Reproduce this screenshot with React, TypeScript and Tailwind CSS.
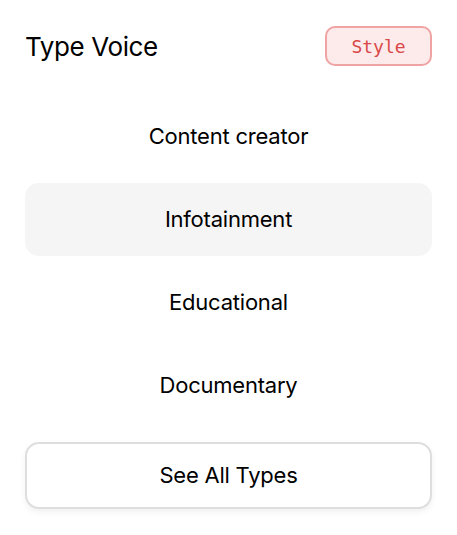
import React from "react";

const types = ["Content creator", "Infotainment", "Educational", "Documentary"];

export default function App() {
  const [active, setActive] = React.useState("Infotainment");

  return (
    <div
      className="min-h-screen w-full bg-white px-[25px] pt-[26px] text-black"
      style={{ fontFamily: "Inter, 'Liberation Sans', sans-serif" }}
    >
      <div className="flex items-center justify-between">
        <h2 className="text-[26px] font-normal tracking-[-0.015em]">Type Voice</h2>
        <span
          className="flex h-[40px] w-[107px] items-center justify-center rounded-[10px] border-2 border-[#f0a3a3] bg-[#fdeaea] text-[18px] text-[#d94848]"
          style={{ fontFamily: "'DejaVu Sans Mono', monospace" }}
        >
          Style
        </span>
      </div>

      <ul className="mt-[34px] flex flex-col gap-[10px]">
        {types.map((t) => (
          <li key={t}>
            <button
              onClick={() => setActive(t)}
              className={`flex h-[73px] w-full items-center justify-center rounded-[14px] text-[22px] tracking-[-0.01em] ${
                active === t ? "bg-[#f5f5f5]" : "bg-transparent"
              }`}
            >
              {t}
            </button>
          </li>
        ))}
      </ul>

      <button className="mt-[20px] flex h-[67px] w-full items-center justify-center rounded-[14px] border-2 border-[#dedede] bg-white text-[22px] tracking-[-0.01em] shadow-[0_3px_6px_rgba(0,0,0,0.06)]">
        See All Types
      </button>
    </div>
  );
}
